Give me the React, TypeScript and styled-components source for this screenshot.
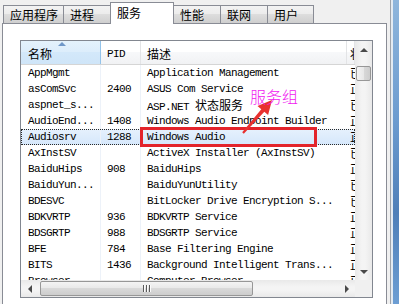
import React from "react";
import styled, { createGlobalStyle } from "styled-components";

interface ServiceRow {
  name: string;
  pid: string;
  desc: string;
}

const rows: ServiceRow[] = [
  { name: "AppMgmt", pid: "", desc: "Application Management" },
  { name: "asComSvc", pid: "2400", desc: "ASUS Com Service" },
  { name: "aspnet_s...", pid: "", desc: "ASP.NET 状态服务" },
  { name: "AudioEnd...", pid: "1408", desc: "Windows Audio Endpoint Builder" },
  { name: "Audiosrv", pid: "1288", desc: "Windows Audio" },
  { name: "AxInstSV", pid: "", desc: "ActiveX Installer (AxInstSV)" },
  { name: "BaiduHips", pid: "908", desc: "BaiduHips" },
  { name: "BaiduYun...", pid: "", desc: "BaiduYunUtility" },
  { name: "BDESVC", pid: "", desc: "BitLocker Drive Encryption S..." },
  { name: "BDKVRTP", pid: "936", desc: "BDKVRTP Service" },
  { name: "BDSGRTP", pid: "988", desc: "BDSGRTP Service" },
  { name: "BFE", pid: "784", desc: "Base Filtering Engine" },
  { name: "BITS", pid: "1436", desc: "Background Intelligent Trans..." },
  { name: "Browser", pid: "", desc: "Computer Browser" },
];

const tabs = [
  { label: "应用程序", width: 61 },
  { label: "进程", width: 48 },
  { label: "服务", width: 64, active: true },
  { label: "性能", width: 48 },
  { label: "联网", width: 48 },
  { label: "用户", width: 47 },
];

const GlobalStyle = createGlobalStyle`
  html, body {
    margin: 0;
    padding: 0;
  }
  body {
    background: #f0f0f0;
    font-family: "Noto Sans CJK SC", "Liberation Sans", sans-serif;
  }
`;

const Window = styled.div`
  position: relative;
  display: flex;
  width: 399px;
  height: 304px;
  overflow: hidden;
  background: #f0f0f0;
`;

const Main = styled.div`
  width: 390px;
  flex: none;
  padding-left: 2px;
  box-sizing: border-box;
  display: flex;
  flex-direction: column;
`;

const Frame = styled.div`
  flex: 1;
  display: flex;
`;

const FrameEdge = styled.div`
  width: 1px;
  background: #a0a4aa;
`;

const FrameGap = styled.div`
  width: 2px;
  background: #e4ebf2;
`;

const FrameGlass = styled.div`
  flex: 1;
  background: linear-gradient(#8fb6dc, #6c9bcf 40%, #4f7fb8 70%, #6d9ed3);
`;

const TabBar = styled.div`
  height: 23px;
  flex: none;
  display: flex;
  align-items: flex-end;
  padding-left: 1px;
`;

const Tab = styled.div<{ $active?: boolean; $w: number }>`
  position: relative;
  z-index: ${(p) => (p.$active ? 2 : 1)};
  width: ${(p) => p.$w}px;
  height: ${(p) => (p.$active ? 22 : 18)}px;
  margin-bottom: ${(p) => (p.$active ? -1 : 0)}px;
  margin-left: -1px;
  &:first-child {
    margin-left: 0;
  }
  box-sizing: border-box;
  border: 1px solid #898c95;
  border-bottom: none;
  padding: ${(p) => (p.$active ? 2 : 1)}px 0 0 6px;
  background: ${(p) =>
    p.$active
      ? "#ffffff"
      : "linear-gradient(#f3f3f3, #ebebeb 50%, #dddddd 50%, #cfcfcf)"};
  font-size: 12px;
  line-height: 16px;
  color: #000;
  white-space: nowrap;
`;

const Panel = styled.div`
  width: 385px;
  height: 300px;
  flex: none;
  box-sizing: border-box;
  border: 1px solid #898c95;
  background: #ffffff;
  padding: 16px 0 0 17px;
`;

const List = styled.div`
  width: 353px;
  height: 258px;
  box-sizing: border-box;
  border: 1px solid #828790;
  background: #ffffff;
  display: grid;
  grid-template-columns: 1fr 17px;
  grid-template-rows: 1fr 17px;
`;

const Content = styled.div`
  overflow: hidden;
`;

const Header = styled.div`
  display: flex;
  height: 24px;
  box-sizing: border-box;
  border-bottom: 1px solid #d5d5d5;
  background: linear-gradient(#ffffff, #ffffff 50%, #f7f8fa 50%, #f1f2f4);
`;

const HeaderCell = styled.div<{ $w?: number; $pl: number; $sorted?: boolean; $mono?: boolean }>`
  position: relative;
  flex: ${(p) => (p.$w ? "none" : "1")};
  width: ${(p) => (p.$w ? `${p.$w}px` : "auto")};
  box-sizing: border-box;
  padding: 3px 0 0 ${(p) => p.$pl}px;
  border-right: 1px solid ${(p) => (p.$sorted ? "#93c3ea" : "#e3e4e6")};
  background: ${(p) =>
    p.$sorted
      ? "linear-gradient(#e4f2fc, #dcedfb 50%, #d3e8fa 50%, #cfe5f8)"
      : "transparent"};
  font-family: ${(p) =>
    p.$mono
      ? `"Liberation Mono", "Noto Sans CJK SC", monospace`
      : `"Noto Sans CJK SC", "Liberation Sans", sans-serif`};
  font-size: ${(p) => (p.$mono ? 11 : 12)}px;
  letter-spacing: ${(p) => (p.$mono ? -0.6 : 0)}px;
  line-height: 20px;
  white-space: nowrap;
  overflow: hidden;
`;

const SortArrow = styled.span`
  position: absolute;
  top: 1px;
  left: 37px;
  width: 0;
  height: 0;
  border-left: 4px solid transparent;
  border-right: 4px solid transparent;
  border-bottom: 4px solid #6f97c8;
`;

const Row = styled.div<{ $selected?: boolean }>`
  display: flex;
  height: 16px;
  background: ${(p) =>
    p.$selected ? "linear-gradient(#e6f1fd, #d5e7fb)" : "transparent"};
  outline: ${(p) => (p.$selected ? "1px dotted #2a2a2a" : "none")};
  outline-offset: -1px;
`;

const Cell = styled.div<{ $w?: number; $pl: number; $grid?: boolean }>`
  flex: ${(p) => (p.$w ? "none" : "1")};
  width: ${(p) => (p.$w ? `${p.$w}px` : "auto")};
  box-sizing: border-box;
  padding-left: ${(p) => p.$pl}px;
  border-right: ${(p) => (p.$grid ? "1px solid #edf2f9" : "none")};
  font-family: "Liberation Mono", "Noto Sans CJK SC", monospace;
  font-size: 11px;
  letter-spacing: -0.6px;
  line-height: 16px;
  color: #000;
  white-space: nowrap;
  overflow: hidden;
`;

const Cjk = styled.span`
  font-family: "Noto Sans CJK SC", sans-serif;
  font-size: 12px;
  letter-spacing: 0;
`;

const VScroll = styled.div`
  grid-row: 1;
  grid-column: 2;
  display: flex;
  flex-direction: column;
  align-items: center;
  background: linear-gradient(to right, #e9e9e9, #f4f4f4 40%, #f4f4f4 60%, #e9e9e9);
`;

const HScroll = styled.div`
  grid-row: 2;
  grid-column: 1;
  display: flex;
  align-items: center;
  background: linear-gradient(#e9e9e9, #f4f4f4 40%, #f4f4f4 60%, #e9e9e9);
`;

const Corner = styled.div`
  grid-row: 2;
  grid-column: 2;
  background: #f0f0f0;
`;

const ArrowButton = styled.div`
  flex: none;
  width: 17px;
  height: 17px;
  display: flex;
  align-items: center;
  justify-content: center;
`;

const EndButton = styled(ArrowButton)<{ $vertical?: boolean }>`
  ${(p) => (p.$vertical ? "margin-top: auto;" : "margin-left: auto;")}
`;

const Arrow = styled.span<{ $dir: "up" | "down" | "left" | "right" }>`
  width: 0;
  height: 0;
  ${(p) =>
    p.$dir === "up"
      ? "border-left: 4px solid transparent; border-right: 4px solid transparent; border-bottom: 4px solid #4a4a4a;"
      : p.$dir === "down"
      ? "border-left: 4px solid transparent; border-right: 4px solid transparent; border-top: 4px solid #4a4a4a;"
      : p.$dir === "left"
      ? "border-top: 4px solid transparent; border-bottom: 4px solid transparent; border-right: 4px solid #4a4a4a;"
      : "border-top: 4px solid transparent; border-bottom: 4px solid transparent; border-left: 4px solid #4a4a4a;"}
`;

const VThumb = styled.div`
  width: 15px;
  height: 15px;
  margin-top: 8px;
  box-sizing: border-box;
  border: 1px solid #979797;
  border-radius: 2px;
  background: linear-gradient(to right, #f4f4f4, #e8e8e8 50%, #d9d9d9 50%, #cdcdcd);
`;

const HThumb = styled.div`
  width: 213px;
  height: 15px;
  margin-left: 2px;
  box-sizing: border-box;
  border: 1px solid #979797;
  border-radius: 2px;
  background: linear-gradient(#f4f4f4, #e8e8e8 50%, #d9d9d9 50%, #cdcdcd);
  display: flex;
  align-items: center;
  justify-content: center;
  gap: 1px;
`;

const Grip = styled.span`
  width: 1px;
  height: 7px;
  background: #5a5a5a;
  box-shadow: 1px 0 0 #fbfbfb;
  margin-right: 1px;
`;

const Callout = styled.svg`
  position: absolute;
  left: 0;
  top: 0;
  pointer-events: none;
`;

const CalloutLabel = styled.div`
  position: absolute;
  left: 250px;
  top: 86px;
  color: #f020f0;
  font-family: "Noto Sans CJK SC", sans-serif;
  font-weight: 300;
  font-size: 16px;
  line-height: 20px;
`;

const renderText = (text: string) => {
  const parts = text.split(/([\u4e00-\u9fff]+)/);
  return parts.map((part, i) =>
    /[\u4e00-\u9fff]/.test(part) ? <Cjk key={i}>{part}</Cjk> : part
  );
};

export default function App() {
  return (
    <>
      <GlobalStyle />
      <Window>
        <Main>
          <TabBar>
            {tabs.map((t) => (
              <Tab key={t.label} $w={t.width} $active={t.active}>
                {t.label}
              </Tab>
            ))}
          </TabBar>
          <Panel>
            <List>
              <Content>
                <Header>
                  <HeaderCell $w={80} $pl={7} $sorted>
                    名称
                    <SortArrow />
                  </HeaderCell>
                  <HeaderCell $w={40} $pl={6} $mono>
                    PID
                  </HeaderCell>
                  <HeaderCell $w={206} $pl={6}>
                    描述
                  </HeaderCell>
                  <HeaderCell $pl={3}>状态</HeaderCell>
                </Header>
                {rows.map((r) => (
                  <Row key={r.name} $selected={r.name === "Audiosrv"}>
                    <Cell $w={80} $pl={7} $grid>
                      {r.name}
                    </Cell>
                    <Cell $w={40} $pl={6} $grid>
                      {r.pid}
                    </Cell>
                    <Cell $w={206} $pl={6}>
                      {renderText(r.desc)}
                    </Cell>
                    <Cell $pl={3}>
                      <Cjk>{r.pid ? "正在运行" : "已停止"}</Cjk>
                    </Cell>
                  </Row>
                ))}
              </Content>
              <VScroll>
                <ArrowButton>
                  <Arrow $dir="up" />
                </ArrowButton>
                <VThumb />
                <EndButton $vertical>
                  <Arrow $dir="down" />
                </EndButton>
              </VScroll>
              <HScroll>
                <ArrowButton>
                  <Arrow $dir="left" />
                </ArrowButton>
                <HThumb>
                  <Grip />
                  <Grip />
                  <Grip />
                </HThumb>
                <EndButton>
                  <Arrow $dir="right" />
                </EndButton>
              </HScroll>
              <Corner />
            </List>
          </Panel>
        </Main>
        <Frame>
          <FrameEdge />
          <FrameGap />
          <FrameGlass />
        </Frame>
        <Callout width="399" height="304" viewBox="0 0 399 304">
          <rect
            x="141.5"
            y="128.5"
            width="174"
            height="17"
            fill="none"
            stroke="#e3242b"
            strokeWidth="3"
          />
          <polygon
            points="242.2,132.3 243.8,133.7 264.3,111.8 268.1,115.1 272,100 257.5,105.9 261.3,109.2"
            fill="#e8312f"
          />
        </Callout>
        <CalloutLabel>服务组</CalloutLabel>
      </Window>
    </>
  );
}
